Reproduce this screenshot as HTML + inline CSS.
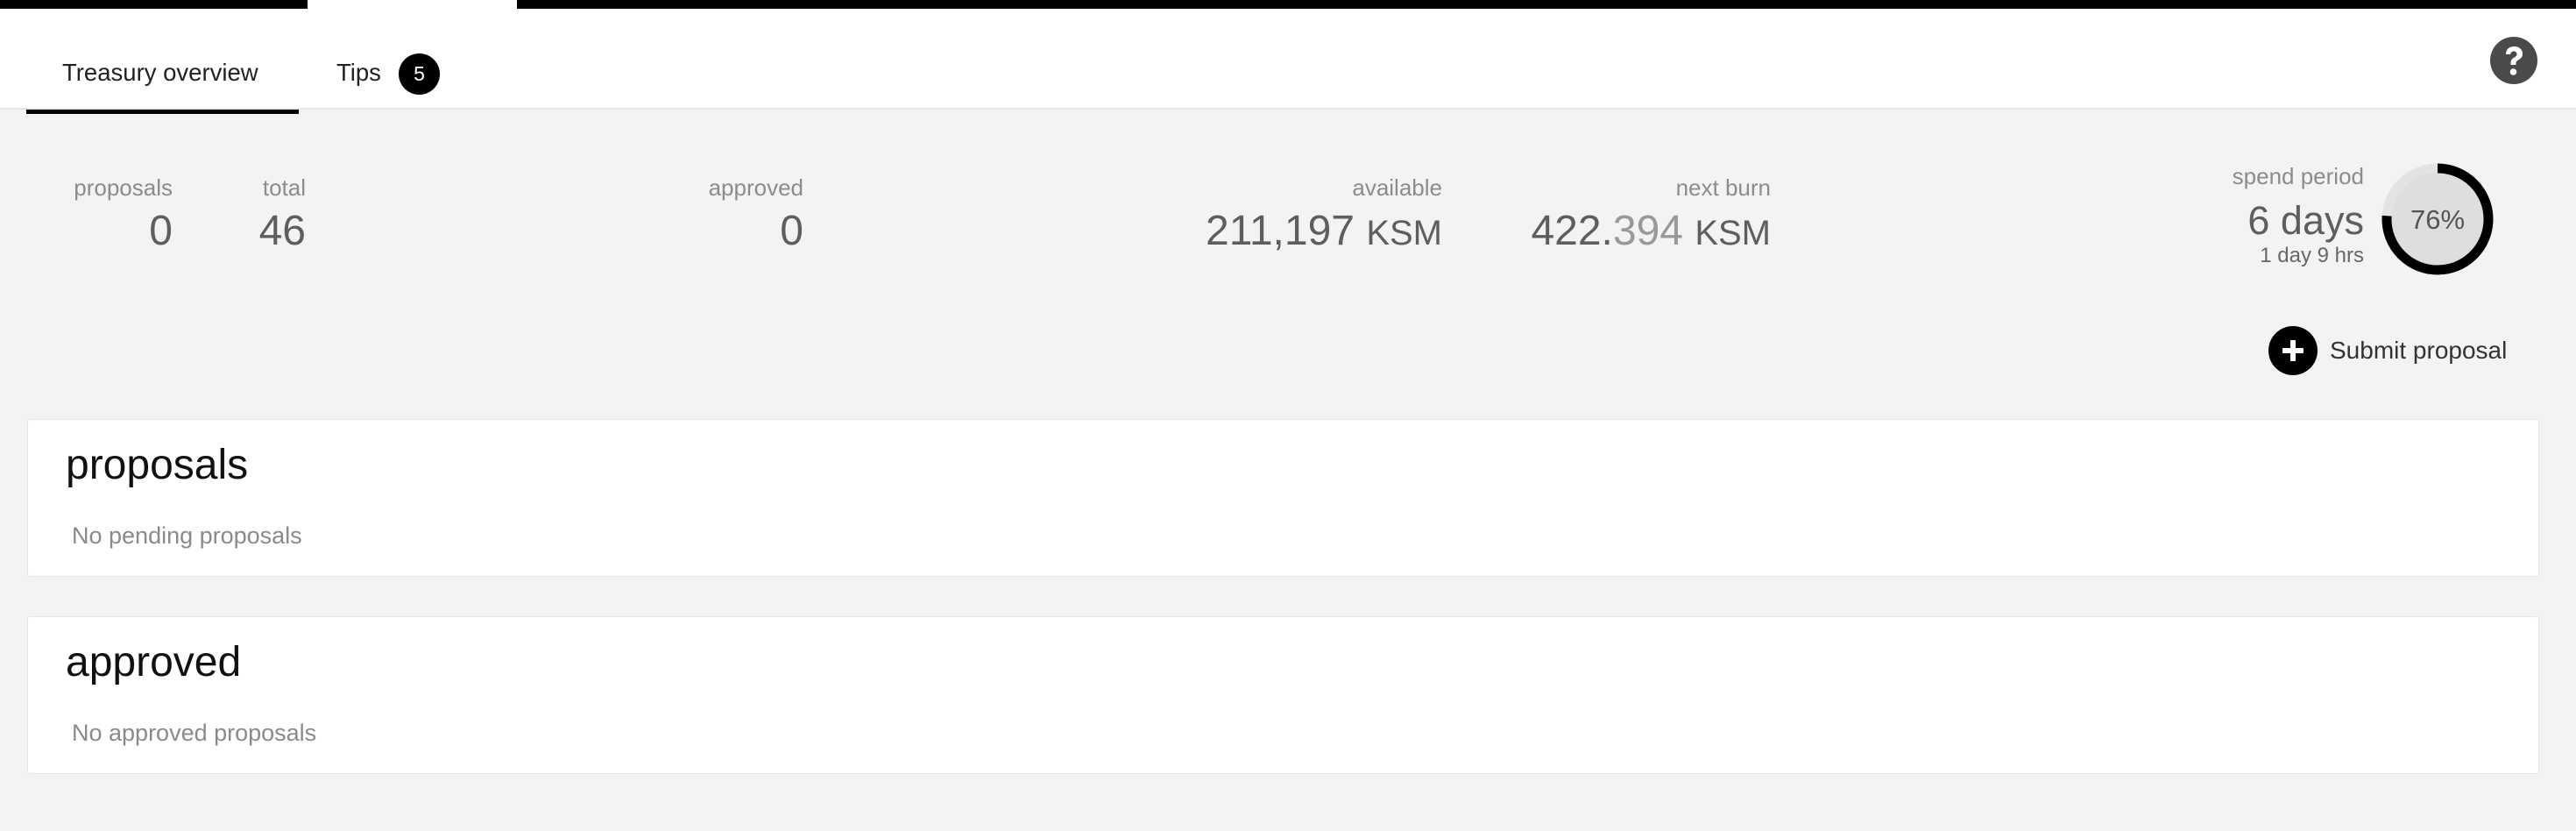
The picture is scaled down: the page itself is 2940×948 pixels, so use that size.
<!DOCTYPE html>
<html><head><meta charset="utf-8"><style>
*{margin:0;padding:0;box-sizing:border-box}
body{width:2940px;height:948px;background:#f3f3f3;font-family:"Liberation Sans",Arial,sans-serif;position:relative;overflow:hidden}
.a{position:absolute;white-space:nowrap}
.lbl{font-size:26px;color:#8c8c8c;text-align:right}
.val{font-size:48px;color:#5e5e5e;text-align:right}
.card{position:absolute;left:31px;width:2867px;background:#fff;border:1px solid #e6e6e6;border-radius:3px}
.ct{position:absolute;left:43px;font-size:48px;color:#111}
.cs{position:absolute;left:50px;font-size:27px;color:#8a8a8a}
</style></head><body>
<div class="a" style="left:0;top:0;width:2940px;height:125px;background:#fff;border-bottom:2px solid #e8e8e8"></div>
<div class="a" style="left:0;top:0;width:351px;height:10px;background:#000"></div>
<div class="a" style="left:590px;top:0;width:2350px;height:10px;background:#000"></div>
<div class="a" style="left:71px;top:67px;font-size:27.5px;color:#222">Treasury overview</div>
<div class="a" style="left:30px;top:125px;width:311px;height:5px;background:#000"></div>
<div class="a" style="left:384px;top:67px;font-size:27.5px;color:#222">Tips</div>
<div class="a" style="left:455px;top:61px;width:47px;height:47px;border-radius:50%;background:#000;color:#fff;font-size:23px;text-align:center;line-height:47px">5</div>
<svg class="a" style="left:2841px;top:41px" width="56" height="56" viewBox="0 0 56 56"><circle cx="28" cy="28" r="27" fill="#4a4a4a"/><path d="M19 21c0-6 4-9 9.5-9S38 15 38 20.5c0 4-2.5 5.5-5 7-2 1.2-2.5 2-2.5 4v1.5h-6v-2c0-3.5 1.5-5 4-6.5 2-1.2 3-2 3-3.8 0-2-1.5-3.2-3.5-3.2-2.3 0-3.6 1.4-3.6 3.5z" fill="#fff"/><circle cx="27.5" cy="41" r="3.8" fill="#fff"/></svg>

<div class="a lbl" style="right:2743px;top:199px">proposals</div>
<div class="a val" style="right:2743px;top:236px">0</div>
<div class="a lbl" style="right:2591px;top:199px">total</div>
<div class="a val" style="right:2591px;top:236px">46</div>
<div class="a lbl" style="right:2023px;top:199px">approved</div>
<div class="a val" style="right:2023px;top:236px">0</div>
<div class="a lbl" style="right:1294px;top:199px">available</div>
<div class="a val" style="right:1294px;top:236px">211,197 <span style="font-size:40px">KSM</span></div>
<div class="a lbl" style="right:919px;top:199px">next burn</div>
<div class="a val" style="right:919px;top:236px">422.<span style="color:#999">394</span> <span style="font-size:40px">KSM</span></div>

<div class="a lbl" style="right:242px;top:186px">spend period</div>
<div class="a" style="right:242px;top:226px;font-size:45px;color:#5e5e5e">6 days</div>
<div class="a" style="right:242px;top:278px;font-size:24px;color:#666">1 day 9 hrs</div>
<svg class="a" style="left:2716px;top:184px" width="132" height="132" viewBox="0 0 132 132">
<circle cx="66" cy="66" r="55" fill="#dedede"/>
<circle cx="66" cy="66" r="58" fill="none" stroke="#e3e3e3" stroke-width="11"/>
<circle cx="66" cy="66" r="58" fill="none" stroke="#000" stroke-width="11" stroke-dasharray="276.9 364.4" transform="rotate(-90 66 66)"/>
<text x="66" y="77" text-anchor="middle" font-family="Liberation Sans,Arial,sans-serif" font-size="31" fill="#555">76%</text>
</svg>

<div class="a" style="left:2589px;top:372px;width:56px;height:56px;border-radius:50%;background:#000"></div>
<div class="a" style="left:2605px;top:397px;width:24px;height:6px;background:#fff;border-radius:1px"></div>
<div class="a" style="left:2614px;top:388px;width:6px;height:24px;background:#fff;border-radius:1px"></div>
<div class="a" style="left:2659px;top:384px;font-size:28px;color:#333">Submit proposal</div>

<div class="card" style="top:478px;height:180px">
<div class="ct" style="top:24px">proposals</div>
<div class="cs" style="top:117px">No pending proposals</div>
</div>
<div class="card" style="top:703px;height:180px">
<div class="ct" style="top:24px">approved</div>
<div class="cs" style="top:117px">No approved proposals</div>
</div>
</body></html>
